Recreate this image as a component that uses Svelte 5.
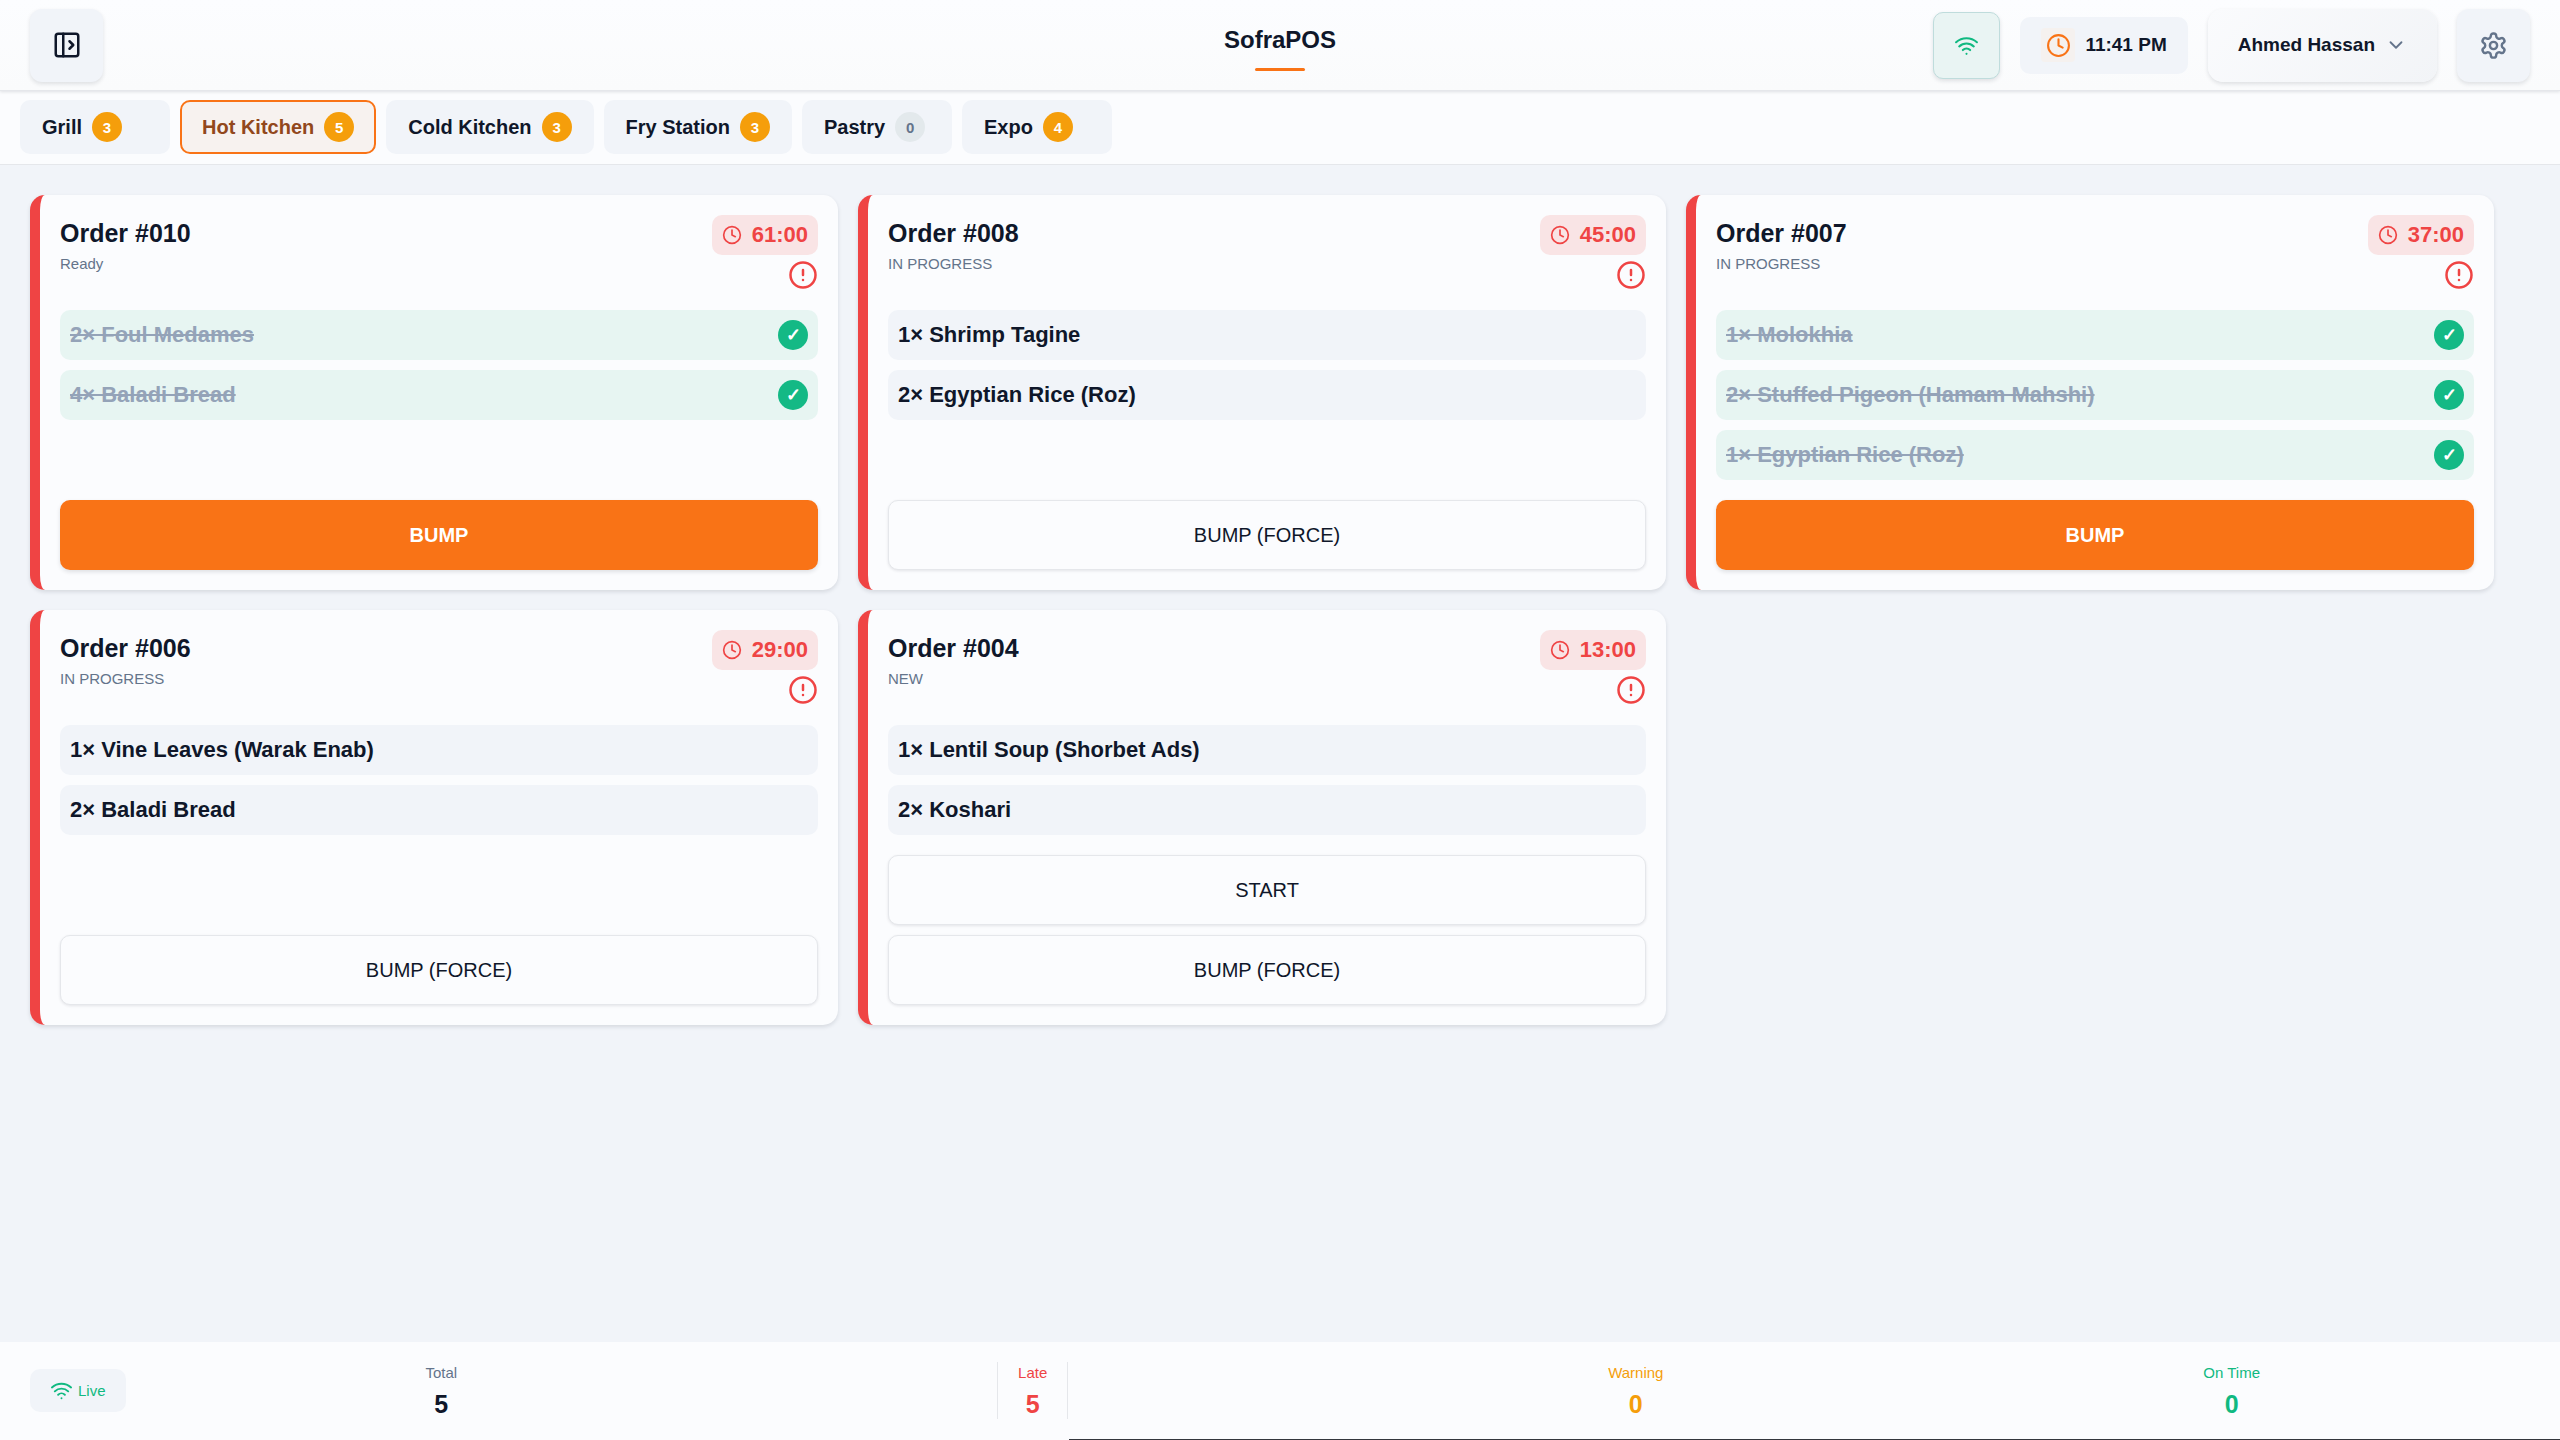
<script>
  const stations = [
    { name: 'Grill', count: 3 },
    { name: 'Hot Kitchen', count: 5, active: true },
    { name: 'Cold Kitchen', count: 3 },
    { name: 'Fry Station', count: 3 },
    { name: 'Pastry', count: 0 },
    { name: 'Expo', count: 4 }
  ];

  const orders = [
    {
      id: '010', status: 'Ready', time: '61:00',
      items: [{ text: '2× Foul Medames', done: true }, { text: '4× Baladi Bread', done: true }],
      actions: [{ label: 'BUMP', primary: true }]
    },
    {
      id: '008', status: 'IN PROGRESS', time: '45:00',
      items: [{ text: '1× Shrimp Tagine' }, { text: '2× Egyptian Rice (Roz)' }],
      actions: [{ label: 'BUMP (FORCE)' }]
    },
    {
      id: '007', status: 'IN PROGRESS', time: '37:00',
      items: [
        { text: '1× Molokhia', done: true },
        { text: '2× Stuffed Pigeon (Hamam Mahshi)', done: true },
        { text: '1× Egyptian Rice (Roz)', done: true }
      ],
      actions: [{ label: 'BUMP', primary: true }]
    },
    {
      id: '006', status: 'IN PROGRESS', time: '29:00',
      items: [{ text: '1× Vine Leaves (Warak Enab)' }, { text: '2× Baladi Bread' }],
      actions: [{ label: 'BUMP (FORCE)' }]
    },
    {
      id: '004', status: 'NEW', time: '13:00',
      items: [{ text: '1× Lentil Soup (Shorbet Ads)' }, { text: '2× Koshari' }],
      actions: [{ label: 'START' }, { label: 'BUMP (FORCE)' }]
    }
  ];

  const stats = [
    { label: 'Total', value: 5, tone: 'total' },
    { label: 'Late', value: 5, tone: 'late' },
    { label: 'Warning', value: 0, tone: 'warning' },
    { label: 'On Time', value: 0, tone: 'ontime' }
  ];
</script>

{#snippet wifi(size)}
  <svg width={size} height={size} viewBox="0 0 24 24" fill="none" stroke="currentColor" stroke-width="2" stroke-linecap="round" stroke-linejoin="round" aria-hidden="true">
    <path d="M12 20h.01" /><path d="M2 8.82a15 15 0 0 1 20 0" /><path d="M5 12.859a10 10 0 0 1 14 0" /><path d="M8.5 16.429a5 5 0 0 1 7 0" />
  </svg>
{/snippet}

{#snippet clock(size)}
  <svg width={size} height={size} viewBox="0 0 24 24" fill="none" stroke="currentColor" stroke-width="2" stroke-linecap="round" stroke-linejoin="round" aria-hidden="true">
    <circle cx="12" cy="12" r="10" /><path d="M12 6v6l4 2" />
  </svg>
{/snippet}

<div class="app">
  <header class="topbar">
    <div class="side">
      <button class="square" aria-label="Open sidebar">
        <svg width="30" height="30" viewBox="0 0 24 24" fill="none" stroke="currentColor" stroke-width="2" stroke-linecap="round" stroke-linejoin="round" aria-hidden="true">
          <rect x="3" y="3" width="18" height="18" rx="2" /><path d="M9 3v18" /><path d="m14 9 3 3-3 3" />
        </svg>
      </button>
    </div>
    <h1 class="brand">SofraPOS</h1>
    <div class="side end">
      <button class="connection" aria-label="Connection status">{@render wifi(25)}</button>
      <div class="time"><span class="time-icon">{@render clock(25)}</span><span>11:41 PM</span></div>
      <button class="user">
        <span>Ahmed Hassan</span>
        <svg width="22" height="22" viewBox="0 0 24 24" fill="none" stroke="currentColor" stroke-width="2" stroke-linecap="round" stroke-linejoin="round" aria-hidden="true"><path d="m6 9 6 6 6-6" /></svg>
      </button>
      <button class="square muted" aria-label="Settings">
        <svg width="29" height="29" viewBox="0 0 24 24" fill="none" stroke="currentColor" stroke-width="2" stroke-linecap="round" stroke-linejoin="round" aria-hidden="true">
          <path d="M12.22 2h-.44a2 2 0 0 0-2 2v.18a2 2 0 0 1-1 1.73l-.43.25a2 2 0 0 1-2 0l-.15-.08a2 2 0 0 0-2.73.73l-.22.38a2 2 0 0 0 .73 2.73l.15.1a2 2 0 0 1 1 1.72v.51a2 2 0 0 1-1 1.74l-.15.09a2 2 0 0 0-.73 2.73l.22.38a2 2 0 0 0 2.73.73l.15-.08a2 2 0 0 1 2 0l.43.25a2 2 0 0 1 1 1.73V20a2 2 0 0 0 2 2h.44a2 2 0 0 0 2-2v-.18a2 2 0 0 1 1-1.73l.43-.25a2 2 0 0 1 2 0l.15.08a2 2 0 0 0 2.73-.73l.22-.39a2 2 0 0 0-.73-2.73l-.15-.08a2 2 0 0 1-1-1.74v-.5a2 2 0 0 1 1-1.74l.15-.09a2 2 0 0 0 .73-2.73l-.22-.38a2 2 0 0 0-2.73-.73l-.15.08a2 2 0 0 1-2 0l-.43-.25a2 2 0 0 1-1-1.73V4a2 2 0 0 0-2-2z" />
          <circle cx="12" cy="12" r="3" />
        </svg>
      </button>
    </div>
  </header>

  <nav class="stations" aria-label="Stations">
    {#each stations as s}
      <button class="station" class:active={s.active} aria-pressed={!!s.active}>
        <span>{s.name}</span><span class="count" class:empty={s.count === 0}>{s.count}</span>
      </button>
    {/each}
  </nav>

  <main class="board">
    {#each orders as o}
      <article class="card">
        <div class="card-head">
          <div>
            <h2>Order #{o.id}</h2>
            <p class="status">{o.status}</p>
          </div>
          <div class="alerts">
            <span class="timer">{@render clock(20)}<span>{o.time}</span></span>
            <svg width="30" height="30" viewBox="0 0 24 24" fill="none" stroke="currentColor" stroke-width="2" stroke-linecap="round" stroke-linejoin="round" role="img" aria-label="Late">
              <circle cx="12" cy="12" r="10" /><path d="M12 8v4" /><path d="M12 16h.01" />
            </svg>
          </div>
        </div>
        <ul class="items">
          {#each o.items as item}
            <li class:done={item.done}>
              <span class="item-name">{item.text}</span>
              {#if item.done}<span class="check">✓</span>{/if}
            </li>
          {/each}
        </ul>
        <div class="actions">
          {#each o.actions as a}
            <button class:primary={a.primary}>{a.label}</button>
          {/each}
        </div>
      </article>
    {/each}
  </main>

  <footer class="summary">
    <div class="live">{@render wifi(23)}<span>Live</span></div>
    <div class="stats">
      {#each stats as s}
        <div class="stat {s.tone}"><span class="label">{s.label}</span><span class="value">{s.value}</span></div>
      {/each}
    </div>
  </footer>
</div>

<style>
  :global(body) { margin: 0; }

  .app {
    --surface: #fbfcfe;
    --ground: #f1f4f9;
    --ink: #0f172a;
    --muted: #64748b;
    --line: #e5e7eb;
    --orange: #f97316;
    --red: #ef4444;
    --green: #10b981;
    --amber: #f59e0b;
    --shadow: 0 2px 4px rgba(15, 23, 42, 0.12);
    box-sizing: border-box;
    min-height: 100vh;
    display: flex;
    flex-direction: column;
    background: var(--ground);
    color: var(--ink);
    font-family: "Liberation Sans", Arial, sans-serif;
  }
  .app :global(*) { box-sizing: border-box; }
  svg { display: block; flex: none; }
  button { font: inherit; color: inherit; margin: 0; cursor: pointer; }
  h1, h2, p, ul { margin: 0; padding: 0; }

  .topbar {
    display: grid;
    grid-template-columns: 1fr auto 1fr;
    align-items: center;
    height: 91px;
    padding: 0 30px;
    background: linear-gradient(#fcfdff, #fafbfc);
    border-bottom: 1px solid var(--line);
    box-shadow: 0 1px 3px rgba(15, 23, 42, 0.12);
    z-index: 1;
  }
  .side { display: flex; align-items: center; gap: 20px; }
  .end { justify-content: flex-end; }
  .square {
    display: grid;
    place-items: center;
    width: 73px;
    height: 73px;
    padding: 0;
    border: 0;
    border-radius: 12px;
    background: var(--ground);
    box-shadow: var(--shadow);
  }
  .muted { color: var(--muted); }
  .brand {
    display: flex;
    flex-direction: column;
    align-items: center;
    gap: 14px;
    padding-top: 7px;
    font-size: 24px;
    line-height: 28px;
    font-weight: 700;
  }
  .brand::after {
    content: "";
    width: 50px;
    height: 3px;
    border-radius: 2px;
    background: var(--orange);
  }
  .connection {
    display: grid;
    place-items: center;
    width: 67px;
    height: 67px;
    padding: 0;
    border: 1px solid #bfdcdc;
    border-radius: 10px;
    background: #e9f4f3;
    color: var(--green);
    box-shadow: var(--shadow);
  }
  .time {
    display: flex;
    align-items: center;
    gap: 10px;
    height: 57px;
    padding: 0 21px;
    border-radius: 10px;
    background: var(--ground);
    font-size: 19px;
    font-weight: 700;
  }
  .time-icon {
    display: grid;
    place-items: center;
    width: 34px;
    height: 34px;
    border-radius: 4px;
    background: #f5f1ef;
    color: var(--orange);
  }
  .user {
    display: flex;
    align-items: center;
    gap: 10px;
    height: 73px;
    padding: 0 30px;
    border: 0;
    border-radius: 15px;
    background: linear-gradient(135deg, #fafbfd, #f2f4f7);
    box-shadow: var(--shadow);
    font-size: 19px;
    font-weight: 700;
  }
  .user svg { color: var(--muted); }

  .stations {
    display: flex;
    gap: 10px;
    padding: 9px 20px 10px;
    background: var(--surface);
    border-bottom: 1px solid var(--line);
  }
  .station {
    display: flex;
    align-items: center;
    gap: 10px;
    min-width: 150px;
    height: 54px;
    padding: 0 20px;
    border: 2px solid transparent;
    border-radius: 10px;
    background: var(--ground);
    font-size: 20px;
    font-weight: 700;
  }
  .station.active { border-color: var(--orange); background: #f7f2ef; color: #92481c; }
  .count {
    display: grid;
    place-items: center;
    width: 30px;
    height: 30px;
    border-radius: 50%;
    background: var(--amber);
    color: #fff;
    font-size: 15px;
  }
  .count.empty { background: #e3e9ec; color: var(--muted); }

  .board {
    flex: 1;
    display: grid;
    grid-template-columns: repeat(3, 1fr);
    align-content: start;
    gap: 20px;
    padding: 30px 66px 30px 30px;
  }
  .card {
    display: flex;
    flex-direction: column;
    gap: 20px;
    padding: 20px;
    border-left: 10px solid var(--red);
    border-radius: 15px;
    background: var(--surface);
    box-shadow: var(--shadow);
  }
  .card-head { display: flex; justify-content: space-between; }
  h2 { font-size: 25px; line-height: 37px; font-weight: 700; }
  .status { font-size: 15px; line-height: 24px; color: var(--muted); }
  .alerts { display: flex; flex-direction: column; align-items: flex-end; gap: 5px; color: var(--red); }
  .timer {
    display: flex;
    align-items: center;
    gap: 10px;
    height: 40px;
    padding: 0 10px;
    border-radius: 10px;
    background: #f9e4e5;
    font-size: 22px;
    font-weight: 700;
  }
  .items { flex: 1; display: flex; flex-direction: column; gap: 10px; list-style: none; }
  .items li {
    display: flex;
    align-items: center;
    justify-content: space-between;
    height: 50px;
    padding: 0 10px;
    border-radius: 10px;
    background: var(--ground);
    font-size: 22px;
    font-weight: 700;
  }
  .items .done { background: #e7f5f2; }
  .done .item-name { color: #94a3b8; text-decoration: line-through; }
  .check {
    display: grid;
    place-items: center;
    width: 30px;
    height: 30px;
    border-radius: 50%;
    background: #14b985;
    color: #fff;
    font-size: 18px;
  }
  .actions { display: flex; flex-direction: column; gap: 10px; }
  .actions button {
    height: 70px;
    border: 1px solid var(--line);
    border-radius: 10px;
    background: var(--surface);
    box-shadow: 0 1px 3px rgba(15, 23, 42, 0.1);
    font-size: 20px;
  }
  .actions .primary { border: 0; background: var(--orange); color: #fff; font-weight: 700; box-shadow: var(--shadow); }

  .summary {
    position: relative;
    display: flex;
    align-items: center;
    gap: 30px;
    padding: 20px 30px 21px;
    background: var(--surface);
  }
  .summary::after {
    content: "";
    position: absolute;
    right: 0;
    bottom: 0;
    width: 58.25%;
    height: 1px;
    background: #33363d;
  }
  .live {
    display: flex;
    align-items: center;
    gap: 5px;
    height: 43px;
    padding: 0 20px;
    border-radius: 10px;
    background: var(--ground);
    color: var(--green);
    font-size: 15px;
  }
  .stats { flex: 1; display: flex; justify-content: space-around; }
  .stat { display: flex; flex-direction: column; align-items: center; gap: 5px; color: var(--muted); }
  .label { font-size: 15px; line-height: 22px; }
  .value { font-size: 25px; line-height: 30px; font-weight: 700; }
  .total .value { color: var(--ink); }
  .late { padding: 0 20px; border: solid var(--line); border-width: 0 1px; color: var(--red); }
  .warning { color: var(--amber); }
  .ontime { color: var(--green); }
</style>
